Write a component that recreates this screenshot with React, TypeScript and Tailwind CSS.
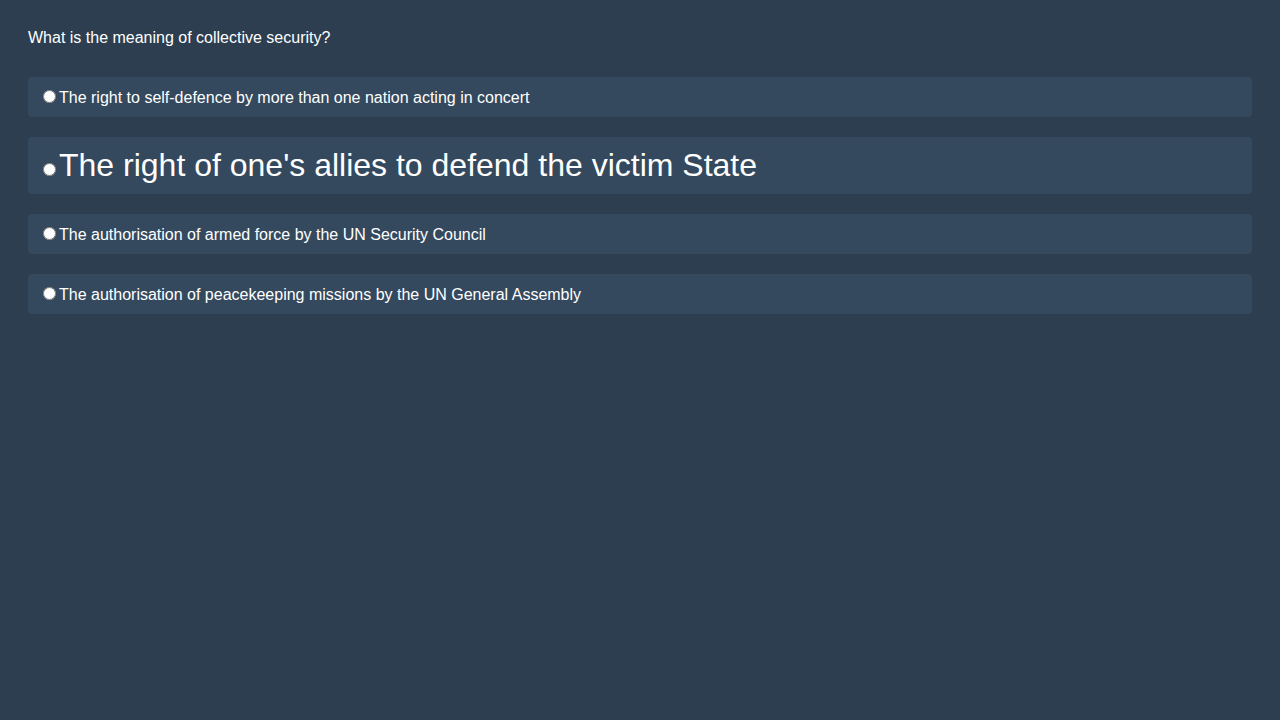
const options = [
  { text: "The right to self-defence by more than one nation acting in concert", big: false },
  { text: "The right of one's allies to defend the victim State", big: true },
  { text: "The authorisation of armed force by the UN Security Council", big: false },
  { text: "The authorisation of peacekeeping missions by the UN General Assembly", big: false },
];

export default function App() {
  return (
    <div className="min-h-screen bg-[#2c3e50] p-[28px] text-white font-['Liberation_Sans',Arial,sans-serif] leading-[normal]">
      <p className="text-[16px] pt-px mb-[30px]">What is the meaning of collective security?</p>
      <div className="flex flex-col gap-[20px]">
        {options.map((o, i) => (
          <label
            key={i}
            className={
              o.big
                ? "block rounded-[4px] bg-[#34495e] px-[10px] py-[10px] text-[32px]"
                : "block rounded-[4px] bg-[#34495e] px-[10px] py-[10px] text-[16px]"
            }
          >
            <input type="radio" name="q" className="mt-[3px] mr-[3px] ml-[5px] h-[13px] w-[13px]" />
            {o.text}
          </label>
        ))}
      </div>
    </div>
  );
}
